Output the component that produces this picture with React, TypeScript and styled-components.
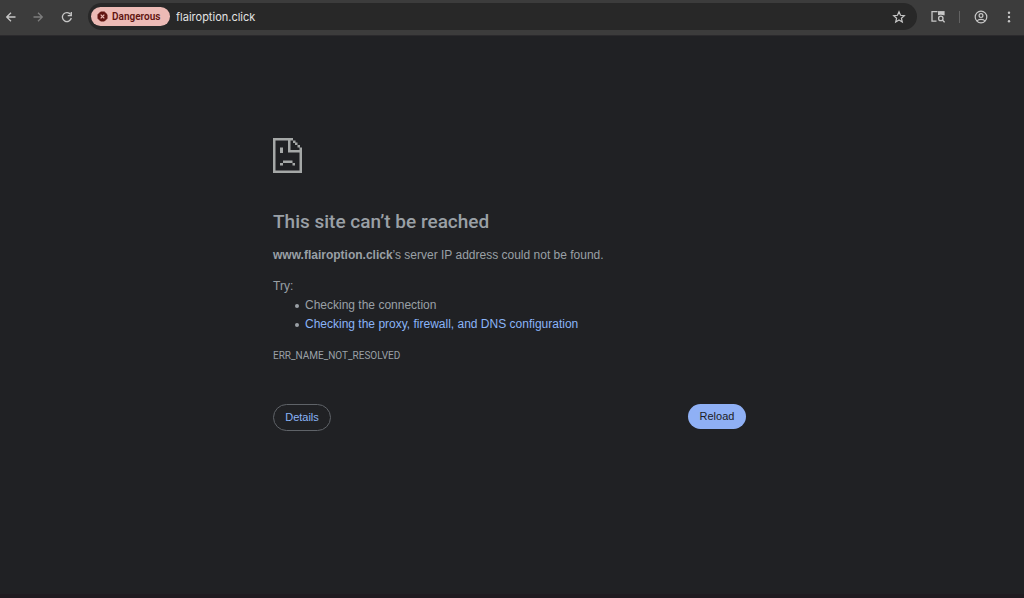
import React from "react";
import styled, { createGlobalStyle } from "styled-components";

const GlobalStyle = createGlobalStyle`
  * { box-sizing: border-box; }
  body {
    margin: 0;
    background: #202124;
    color: #9aa0a6;
    font-family: "Liberation Sans", sans-serif;
  }
`;

const Window = styled.div`
  display: flex;
  flex-direction: column;
  min-height: 100vh;
  border-bottom: 4px solid #1f1b20;
`;

const Toolbar = styled.header`
  display: flex;
  align-items: center;
  height: 36px;
  padding: 0 1px 2px 0;
  background: #3c3c3c;
  border-bottom: 1px solid #2b2a2d;
`;

const IconButton = styled.button<{ $width: number; $color?: string }>`
  display: flex;
  flex: none;
  align-items: center;
  justify-content: center;
  width: ${(p) => p.$width}px;
  height: 26px;
  padding: 0;
  border: 0;
  background: none;
  color: ${(p) => p.$color ?? "#c7c7c7"};
`;

const AddressBar = styled.div`
  display: flex;
  flex: 1;
  align-items: center;
  height: 27px;
  margin: 0 7px;
  padding: 0 5px 0 3px;
  border-radius: 14px;
  background: #282828;
`;

const DangerChip = styled.button`
  display: flex;
  flex: none;
  align-items: center;
  gap: 4px;
  width: 79px;
  height: 19px;
  padding: 0 0 0 6px;
  border: 0;
  border-radius: 10px;
  background: #ecbab5;
  color: #601410;
  font: 600 10px/19px Roboto, sans-serif;
`;

const UrlInput = styled.input`
  flex: 1;
  min-width: 0;
  height: 20px;
  margin-left: 6px;
  padding: 0;
  border: 0;
  outline: 0;
  background: none;
  color: #e3e3e3;
  font: 400 11px/20px Inter, sans-serif;
`;

const Divider = styled.span`
  width: 1px;
  height: 12px;
  margin: 0 7px;
  background: #626262;
`;

const Content = styled.div`
  padding: 102px 5px 0 0;
`;

const ErrorPage = styled.main`
  width: 100%;
  max-width: 473px;
  margin: 0 auto;
  font-size: 12px;
  line-height: 19px;
`;

const SadPage = styled.svg`
  display: block;
  width: 29px;
  height: 35px;
`;

const Title = styled.h1`
  margin: 36px 0 11px;
  font-family: Roboto, sans-serif;
  font-size: 19px;
  font-weight: 500;
  line-height: 26px;
`;

const Paragraph = styled.p`
  margin: 0 0 12px;
`;

const Suggestions = styled.ul`
  margin: 0;
  padding-left: 22px;
  list-style: none;
`;

const Suggestion = styled.li`
  display: flex;
  align-items: center;
  gap: 6px;

  &::before {
    content: "";
    width: 4px;
    height: 4px;
    border-radius: 50%;
    background: currentColor;
  }
`;

const HelpLink = styled.a`
  color: #8ab4f8;
  text-decoration: none;
`;

const ErrorCode = styled.div`
  margin-top: 12px;
  font-family: Roboto, sans-serif;
  font-size: 10px;
`;

const Actions = styled.div`
  display: flex;
  align-items: flex-start;
  justify-content: space-between;
  margin-top: 39px;
`;

const PillButton = styled.button<{ $primary?: boolean }>`
  width: 58px;
  height: ${(p) => (p.$primary ? 25 : 27)}px;
  padding: 0 0 1px;
  border: ${(p) => (p.$primary ? "0" : "1px solid #5f6368")};
  border-radius: 14px;
  background: ${(p) => (p.$primary ? "#8fb0f5" : "transparent")};
  color: ${(p) => (p.$primary ? "#202124" : "#8ab4f8")};
  font: 400 11px/16px "Liberation Sans", sans-serif;
`;

const stroke = { fill: "none", stroke: "currentColor", strokeWidth: 1.3 };

export default function App() {
  return (
    <>
      <GlobalStyle />
      <Window>
        <Toolbar>
          <IconButton $width={21} aria-label="Back">
            <svg width="12" height="12" viewBox="0 0 12 12" {...stroke}>
              <path d="M10.5 6H1.8M6 1.7 1.7 6 6 10.3" />
            </svg>
          </IconButton>
          <IconButton $width={34} $color="#7d7d7d" aria-label="Forward">
            <svg width="12" height="12" viewBox="0 0 12 12" {...stroke}>
              <path d="M1.5 6h8.7M6 1.7 10.3 6 6 10.3" />
            </svg>
          </IconButton>
          <IconButton $width={26} aria-label="Reload page">
            <svg width="14" height="12" viewBox="1 0 14 12" {...stroke}>
              <path d="M10.6 3.5A4.5 4.5 0 1 0 11.3 7M11.3 1v3.6H7.7" />
            </svg>
          </IconButton>
          <AddressBar>
            <DangerChip>
              <svg width="11" height="11" viewBox="0 0 11 11" aria-hidden="true">
                <path
                  fill="#601410"
                  d="M3.6 1h3.8L10 3.6v3.8L7.4 10H3.6L1 7.4V3.6z"
                  stroke="#601410"
                  strokeLinejoin="round"
                />
                <path d="m3.7 3.7 3.6 3.6m0-3.6L3.7 7.3" stroke="#ecbab5" strokeWidth="1.2" />
              </svg>
              Dangerous
            </DangerChip>
            <UrlInput aria-label="Address" defaultValue="flairoption.click" />
            <IconButton $width={27} aria-label="Bookmark this page">
              <svg width="14" height="14" viewBox="0 0 14 14" {...stroke} strokeWidth={1.2}>
                <path d="m7 1.8 1.5 3.5 3.8.4-2.9 2.5.9 3.8L7 10l-3.3 2 .9-3.8-2.9-2.5 3.8-.4z" />
              </svg>
            </IconButton>
          </AddressBar>
          <IconButton $width={28} aria-label="Search this page">
            <svg width="14" height="13" viewBox="0 0 14 13" {...stroke}>
              <path d="M5.5 11.2H1V1.7h5.5" />
              <path d="M7 1.1h6.6v4.2H7z" fill="currentColor" stroke="none" />
              <circle cx="9.8" cy="8.4" r="2.2" stroke="#3c3c3c" strokeWidth="3" />
              <circle cx="9.8" cy="8.4" r="2.2" />
              <path d="m11.4 10 2.2 2.3" />
            </svg>
          </IconButton>
          <Divider />
          <IconButton $width={28} aria-label="Profile">
            <svg width="14" height="14" viewBox="0 0 14 14" {...stroke} strokeWidth={1.2}>
              <circle cx="7" cy="7" r="5.8" />
              <circle cx="7" cy="5.6" r="1.9" />
              <path d="M3 11c1.7-2.3 6.3-2.3 8 0" />
            </svg>
          </IconButton>
          <IconButton $width={28} aria-label="Menu">
            <svg width="4" height="12" viewBox="0 0 4 12" fill="currentColor">
              <circle cx="2" cy="1.7" r="1.2" />
              <circle cx="2" cy="6" r="1.2" />
              <circle cx="2" cy="10.3" r="1.2" />
            </svg>
          </IconButton>
        </Toolbar>
        <Content>
          <ErrorPage>
            <SadPage viewBox="0 0 29 35" fill="#a5a8a7" aria-hidden="true">
              <path d="M0 0h20v2.5H2.5v30h24V14.5H15V2.5h2.5V12h9V9.5H29V35H0zM20 2.5h2.5V5H20zM22 4.5h2.5V7H22zM24.5 7H27v2.5h-2.5zM7 9.5h3V15H7zM10 22.5h9.5V25H10zM7 25h3v2.5H7zM19.5 25h2.5v2.5h-2.5z" />
            </SadPage>
            <Title>This site can’t be reached</Title>
            <Paragraph>
              <strong>www.flairoption.click</strong>’s server IP address could not be found.
            </Paragraph>
            <div>Try:</div>
            <Suggestions>
              <Suggestion>Checking the connection</Suggestion>
              <Suggestion>
                <HelpLink href="#buttons">Checking the proxy, firewall, and DNS configuration</HelpLink>
              </Suggestion>
            </Suggestions>
            <ErrorCode>ERR_NAME_NOT_RESOLVED</ErrorCode>
            <Actions id="buttons">
              <PillButton>Details</PillButton>
              <PillButton $primary>Reload</PillButton>
            </Actions>
          </ErrorPage>
        </Content>
      </Window>
    </>
  );
}
